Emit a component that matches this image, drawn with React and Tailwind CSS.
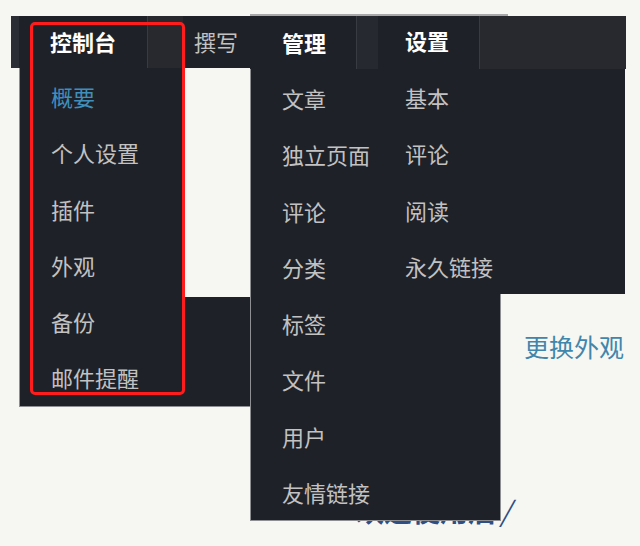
import React from 'react'

const dashboardItems = ['概要', '个人设置', '插件', '外观', '备份', '邮件提醒']
const manageItems = ['文章', '独立页面', '评论', '分类', '标签', '文件', '用户', '友情链接']
const settingItems = ['基本', '评论', '阅读', '永久链接']

const font = { fontFamily: '"Noto Sans CJK SC", "Noto Sans", sans-serif' }

function MenuItem({ label, active }) {
  return (
    <div
      className={`h-[56.25px] flex items-center text-[22px] leading-none ${
        active ? 'text-[#3f8fbc]' : 'text-[#c2c2c2]'
      }`}
    >
      {label}
    </div>
  )
}

export default function App() {
  return (
    <div className="relative w-[640px] h-[546px] bg-[#f6f6f2] overflow-hidden" style={font}>
      {/* page content peeking out behind the menus */}
      <div className="absolute left-[524px] top-[334px] text-[25px] leading-none text-[#3f86ad]">
        更换外观
      </div>
      <div className="absolute left-[356px] top-[496px] text-[28px] leading-none font-bold text-[#2d4f86]">
        欢迎使用后<span className="italic font-normal ml-[4px]">/</span>
      </div>

      {/* left window: 控制台 */}
      <div className="absolute left-[11px] top-[16px]">
        <div className="flex h-[52px]">
          <div className="w-[8px] bg-[#2a2d33]" />
          <div className="w-[128px] bg-[#1f2128] flex items-center pl-[31px] pb-[3px] text-[22px] font-bold text-white leading-none">
            控制台
          </div>
          <div className="w-px bg-[#383b41]" />
          <div className="w-[35px] bg-[#27292f]" />
          <div className="w-[67px] bg-[#1f2128] flex items-center pl-[11px] pb-[2px] text-[22px] text-[#c2c2c2] leading-none">
            撰写
          </div>
        </div>
        <div className="flex items-end">
          <div className="w-[166px] ml-[8px] bg-[#1f2128] border-l border-b border-[#8d8f93] pl-[31px]">
            {dashboardItems.map((item, i) => (
              <MenuItem key={item} label={item} active={i === 0} />
            ))}
          </div>
          <div className="w-[65px] h-[110px] bg-[#1f2128] border-b border-[#8d8f93]" />
        </div>
      </div>

      {/* red highlight */}
      <div className="absolute left-[30px] top-[22px] w-[155px] h-[373px] border-[3px] border-[#ff1c1c] rounded-[5px]" />

      {/* right window: 管理 / 设置 */}
      <div className="absolute left-[250px] top-[14px]">
        <div className="h-[2px] w-[258px] bg-[#a8a8a8]" />
        <div className="flex h-[53px]">
          <div className="w-[106px] bg-[#1f2128] flex items-center pl-[32px] pb-[2px] text-[22px] font-bold text-white leading-none">
            管理
          </div>
          <div className="w-px bg-[#383b41]" />
          <div className="w-[21px] bg-[#26292f]" />
          <div className="w-[101px] bg-[#1f2128] flex items-center pl-[27px] pb-[5px] text-[22px] font-bold text-white leading-none">
            设置
          </div>
          <div className="w-px bg-[#383b41]" />
          <div className="w-[146px] bg-[#27292f]" />
        </div>
        <div className="relative">
          <div className="w-[251px] bg-[#1f2128] border-l border-b border-r border-[#8d8f93] pl-[31px] pt-[1px]">
            {manageItems.map((item) => (
              <MenuItem key={item} label={item} />
            ))}
          </div>
          <div className="absolute left-[128px] top-0 w-[247px] bg-[#1f2128] pl-[27px]">
            {settingItems.map((item) => (
              <MenuItem key={item} label={item} />
            ))}
          </div>
        </div>
      </div>
    </div>
  )
}
